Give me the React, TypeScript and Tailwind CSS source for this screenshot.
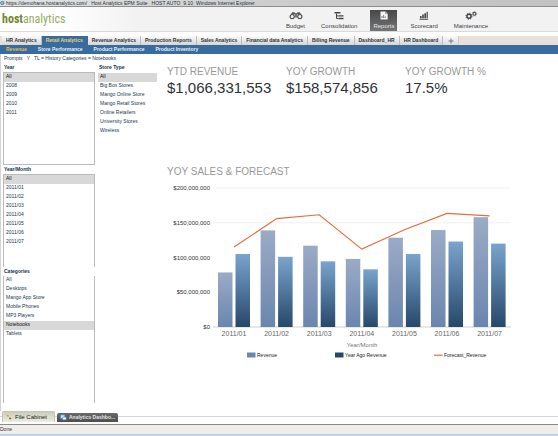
import type { ReactNode } from "react";

type ChartPoint = {
  month: string;
  revenue: number;
  yearAgo: number;
  forecast: number;
};

type ListFilterProps = {
  id: string;
  label: string;
  options: string[];
  selected: string;
  className: string;
};

const tabs = [
  "HR Analytics",
  "Retail Analytics",
  "Revenue Analytics",
  "Production Reports",
  "Sales Analytics",
  "Financial data Analytics",
  "Billing Revenue",
  "Dashboard_HR",
  "HR Dashboard",
];

const subTabs = [
  "Revenue",
  "Store Performance",
  "Product Performance",
  "Product Inventory",
];

const kpis = [
  { label: "YTD REVENUE", value: "$1,066,331,553" },
  { label: "YOY GROWTH", value: "$158,574,856" },
  { label: "YOY GROWTH %", value: "17.5%" },
];

// Values in millions of dollars
const points: ChartPoint[] = [
  { month: "2011/01", revenue: 78.5, yearAgo: 105, forecast: 115 },
  { month: "2011/02", revenue: 139, yearAgo: 101, forecast: 156 },
  { month: "2011/03", revenue: 117, yearAgo: 94.5, forecast: 161.5 },
  { month: "2011/04", revenue: 98, yearAgo: 83, forecast: 112 },
  { month: "2011/05", revenue: 128.5, yearAgo: 105, forecast: 140 },
  { month: "2011/06", revenue: 139.5, yearAgo: 123, forecast: 163.5 },
  { month: "2011/07", revenue: 158, yearAgo: 120, forecast: 160 },
];

function BudgetIcon() {
  return (
    <svg aria-hidden="true" viewBox="0 0 14 9" className="h-[9px] w-[14px]">
      <path
        d="M1.2 4.5 3.2 1.2h2.2l.8 1h1.6l.8-1h2.2l2 3.3-2 .2-2.6-1.4H5.8L3.2 4.7z"
        fill="#555"
      />
      <circle cx="3.2" cy="5.6" r="2.1" fill="#f2f2f2" stroke="#555" strokeWidth="1.2" />
      <circle cx="10.8" cy="5.6" r="2.1" fill="#f2f2f2" stroke="#555" strokeWidth="1.2" />
      <path d="M6.2 3h1.6v3.4H6.2z" fill="#555" />
    </svg>
  );
}

function ConsolidationIcon() {
  return (
    <svg aria-hidden="true" viewBox="0 0 14 9" className="h-[9px] w-[14px]">
      <path d="M2.5 1h6v1.6h-6zM6.5 4.2h5v1.4h-5zM6.5 6.8h5v1.4h-5z" fill="#444" />
      <path d="M4.5 2.5v5h2M4.5 4.9h2" fill="none" stroke="#444" />
    </svg>
  );
}

function ReportsIcon() {
  return (
    <svg aria-hidden="true" viewBox="0 0 14 9" className="h-[9px] w-[14px]">
      <path d="M3.5.5h5l2.2 2.2v5.8H3.5z" fill="#f4f4f4" />
      <path d="M8.5.5v2.2h2.2" fill="none" stroke="#777" strokeWidth=".6" />
      <path d="M5 7V5M6.6 7V4M8.2 7V5.4" stroke="#666" strokeWidth=".8" />
    </svg>
  );
}

function ScorecardIcon() {
  return (
    <svg aria-hidden="true" viewBox="0 0 14 9" className="h-[9px] w-[14px]">
      <path
        d="M3 5h1.6v2.4H3zM5.2 3.4h1.6v4H5.2zM7.4 2.2H9v5.2H7.4zM9.6.8h1.2v6.6H9.6zM2.6 8h8.6v.7H2.6z"
        fill="#444"
      />
    </svg>
  );
}

function MaintenanceIcon() {
  return (
    <svg aria-hidden="true" viewBox="0 0 14 9" className="h-[9px] w-[14px]">
      <circle cx="5" cy="5.2" r="2" fill="none" stroke="#444" strokeWidth="1.5" />
      <circle
        cx="5"
        cy="5.2"
        r="3"
        fill="none"
        stroke="#444"
        strokeWidth="1"
        strokeDasharray="1.2 1.15"
      />
      <circle cx="10.4" cy="2.8" r="1.4" fill="none" stroke="#555" strokeWidth="1.1" />
      <circle
        cx="10.4"
        cy="2.8"
        r="2.2"
        fill="none"
        stroke="#555"
        strokeWidth=".7"
        strokeDasharray=".9 .8"
      />
    </svg>
  );
}

function NavButton({
  label,
  icon,
  active = false,
}: {
  label: string;
  icon: ReactNode;
  active?: boolean;
}) {
  return (
    <button
      type="button"
      className={`flex h-[21px] flex-col items-center px-[3px] pt-px text-[6px] leading-[8px] ${
        active
          ? "bg-linear-to-b from-[#484848] to-[#757575] text-[#e4e9ee]"
          : "text-[#3f4246]"
      }`}
    >
      {icon}
      <span className="mt-[2px]">{label}</span>
    </button>
  );
}

function ListFilter({ id, label, options, selected, className }: ListFilterProps) {
  return (
    <div>
      <label
        htmlFor={id}
        className="block h-[9px] pl-px text-[5px] leading-[9px] font-bold text-[#17324a]"
      >
        {label}
      </label>
      <select
        id={id}
        size={options.length}
        defaultValue={selected}
        className={`block appearance-none overflow-hidden rounded-none bg-white p-0 text-[5px] text-[#24384c] outline-none ${className}`}
      >
        {options.map((option) => (
          <option
            key={option}
            value={option}
            className="h-[9px] min-h-0 p-0 pl-[2px] leading-[9px] checked:bg-[linear-gradient(#d8d8d8,#d8d8d8)]"
          >
            {option}
          </option>
        ))}
      </select>
    </div>
  );
}

const BASE_Y = 145;
const FIRST_CENTER = 67;
const STEP = 42.6;

function toY(value: number) {
  return BASE_Y - (value / 200) * 139;
}

function SalesChart() {
  const line = points
    .map((point, index) => `${FIRST_CENTER + index * STEP},${toY(point.forecast)}`)
    .join(" ");

  return (
    <svg
      role="img"
      aria-label="YOY sales and forecast by month"
      viewBox="0 0 350 180"
      className="mt-[4px] w-full max-w-[350px]"
    >
      <defs>
        <linearGradient id="revenue" x1="0" y1="0" x2="0" y2="1">
          <stop offset="0" stopColor="#9babc6" />
          <stop offset="1" stopColor="#6a86ae" />
        </linearGradient>
        <linearGradient id="year-ago" x1="0" y1="0" x2="0" y2="1">
          <stop offset="0" stopColor="#7aa4cd" />
          <stop offset="1" stopColor="#26486a" />
        </linearGradient>
      </defs>

      {[200, 150, 100, 50, 0].map((tick) => (
        <g key={tick}>
          {tick !== 100 && tick !== 50 ? (
            <path
              d={`M46 ${toY(tick)}H344`}
              stroke={tick === 0 ? "#cfcfcf" : "#f0f0f0"}
            />
          ) : null}
          <text x="43" y={toY(tick) + 2} fontSize="6" textAnchor="end" fill="#333">
            {tick === 0 ? "$0" : `$${tick},000,000`}
          </text>
        </g>
      ))}

      {points.map((point, index) => {
        const center = FIRST_CENTER + index * STEP;

        return (
          <g key={point.month}>
            <rect
              x={center - 16}
              y={toY(point.revenue)}
              width="14.5"
              height={BASE_Y - toY(point.revenue)}
              fill="url(#revenue)"
            />
            <rect
              x={center + 1.5}
              y={toY(point.yearAgo)}
              width="14.5"
              height={BASE_Y - toY(point.yearAgo)}
              fill="url(#year-ago)"
            />
            <text x={center} y="154" fontSize="7" textAnchor="middle" fill="#666">
              {point.month}
            </text>
          </g>
        );
      })}

      <polyline points={line} fill="none" stroke="#e2703f" strokeWidth="1.2" />

      <text x="195" y="165" fontSize="6" textAnchor="middle" fill="#777">
        Year/Month
      </text>

      <g fontSize="5" fill="#222">
        <rect x="80" y="170.5" width="8.5" height="5" fill="#6a86ae" />
        <text x="90" y="175">Revenue</text>
        <rect x="168" y="170.5" width="8.5" height="5" fill="#26486a" />
        <text x="178" y="175">Year Ago Revenue</text>
        <path d="M267 173.2h8.5" stroke="#e2703f" strokeWidth="1.2" />
        <text x="277" y="175">Forecast_Revenue</text>
      </g>
    </svg>
  );
}

export default function App() {
  return (
    <div className="flex min-h-screen flex-col overflow-hidden bg-white font-['Liberation_Sans',Arial,sans-serif] whitespace-nowrap">
      <div className="flex h-[7px] items-center border-b border-[#8e8e8e] bg-linear-to-r from-[#e4e4e4] via-[#cccccc] to-[#c2c2c2] text-[5px] leading-[6px] text-[#26313c]">
        <svg aria-hidden="true" viewBox="0 0 6 6" className="mr-px h-[6px] w-[5px]">
          <circle cx="2.8" cy="3" r="2" fill="none" stroke="#2a82cf" strokeWidth="1.2" />
          <path d="M1 3h3.6" stroke="#2a82cf" />
          <path d="M.4 4.6C1 2 4 .4 5.6.8" fill="none" stroke="#e3b23c" strokeWidth=".6" />
        </svg>
        <span>https://demohana.hostanalytics.com/</span>
        <span className="ml-[4px]">Host Analytics EPM Suite</span>
        <span className="ml-[4px]">HOST AUTO</span>
        <span className="ml-[3px]">9.10</span>
        <span className="ml-[3px]">Windows Internet Explorer</span>
      </div>

      <header className="flex h-[25px] border-b border-[#dadada] bg-linear-to-r from-white from-10% to-[#f2f2f2] to-25%">
        <a
          href="#home"
          className="flex w-[283px] shrink-0 items-center pl-[2px] font-['Liberation_Sans_Narrow','Roboto_Condensed','Open_Sans',sans-serif] text-[12px] leading-[14px] text-[#9aaa62]"
        >
          <b className="text-[#728530]">host</b>analytics
        </a>
        <nav className="flex gap-[10px] pt-[3px]">
          <NavButton label="Budget" icon={<BudgetIcon />} />
          <NavButton label="Consolidation" icon={<ConsolidationIcon />} />
          <NavButton label="Reports" icon={<ReportsIcon />} active />
          <NavButton label="Scorecard" icon={<ScorecardIcon />} />
          <NavButton label="Maintenance" icon={<MaintenanceIcon />} />
        </nav>
      </header>

      <div className="mt-[4px] flex h-[9px] bg-[#e9e1d9] pl-[2px] text-[5px] leading-[9px] font-bold text-[#333]">
        {tabs.map((tab) => (
          <button
            key={tab}
            type="button"
            className={`border-r px-[4px] ${
              tab === "Retail Analytics"
                ? "border-[#386c9f] bg-[#386c9f] text-[#e9cf7c]"
                : "border-[#bdbdbd] bg-linear-to-b from-[#fafafa] to-[#d6d6d6]"
            }`}
          >
            {tab}
          </button>
        ))}
        <button
          type="button"
          aria-label="Add tab"
          className="flex w-[16px] items-center justify-center border-r border-[#cccccc] bg-linear-to-b from-[#fafafa] to-[#dcdcdc]"
        >
          <svg aria-hidden="true" viewBox="0 0 6 6" className="h-[6px] w-[6px]">
            <path d="M3 .5v5M.5 3h5" stroke="#777" />
          </svg>
        </button>
      </div>

      <nav className="flex h-[9px] gap-[11px] bg-[#386c9f] pl-[6px] text-[5px] leading-[8px] font-bold text-[#e6eef6]">
        {subTabs.map((tab) => (
          <a
            key={tab}
            href="#report"
            className={tab === "Revenue" ? "text-[#e8b84c]" : ""}
          >
            {tab}
          </a>
        ))}
      </nav>

      <div className="flex flex-1 flex-col border-l border-[#d4d4d4] pl-[2px]">
        <p className="h-[9px] pl-px text-[5px] leading-[9px] text-[#24384c]">
          Prompts &nbsp; Y &nbsp; TL = History Categories = Notebooks
        </p>

        <div className="flex">
          <aside className="flex w-[164px] shrink-0 gap-[3px]">
            <div className="w-[92px]">
              <ListFilter
                id="year"
                label="Year"
                options={["All", "2008", "2009", "2010", "2011"]}
                selected="All"
                className="h-[93px] w-full border border-[#b9bbbd]"
              />
              <ListFilter
                id="year-month"
                label="Year/Month"
                options={[
                  "All",
                  "2011/01",
                  "2011/02",
                  "2011/03",
                  "2011/04",
                  "2011/05",
                  "2011/06",
                  "2011/07",
                ]}
                selected="All"
                className="h-[93px] w-full border-x border-t border-[#b9bbbd]"
              />
              <ListFilter
                id="categories"
                label="Categories"
                options={[
                  "All",
                  "Desktops",
                  "Mango App Store",
                  "Mobile Phones",
                  "MP3 Players",
                  "Notebooks",
                  "Tablets",
                ]}
                selected="Notebooks"
                className="h-[127px] w-full border-x border-[#b9bbbd]"
              />
            </div>
            <ListFilter
              id="store-type"
              label="Store Type"
              options={[
                "All",
                "Big Box Stores",
                "Mango Online Store",
                "Mango Retail Stores",
                "Online Retailers",
                "University Stores",
                "Wireless",
              ]}
              selected="All"
              className="h-[93px] w-[59px] border-t border-white"
            />
          </aside>

          <main className="min-w-0 flex-1 pt-[3px]">
            <dl className="grid grid-cols-[119px_119px_1fr]">
              {kpis.map((kpi) => (
                <div key={kpi.label}>
                  <dt className="text-[10px] leading-[12px] text-[#999]">{kpi.label}</dt>
                  <dd className="text-[15px] leading-[20px] text-[#303236]">{kpi.value}</dd>
                </div>
              ))}
            </dl>
            <h2 className="mt-[68px] text-[10px] leading-[12px] text-[#999]">
              YOY SALES &amp; FORECAST
            </h2>
            <SalesChart />
          </main>
        </div>
      </div>

      <footer>
        <div className="flex h-[11px] items-end gap-[2px] bg-[linear-gradient(#d4d4d4,#d4d4d4)] bg-[length:100%_1px] bg-[position:0_5px] bg-no-repeat pl-[2px]">
          <button
            type="button"
            className="flex h-[11px] w-[53px] items-center gap-[3px] rounded-t-[2px] border border-b-0 border-[#c3c6b4] bg-linear-to-b from-[#c9cdb8] to-[#ecede4] pl-[3px] text-[6px] leading-[9px] text-[#222]"
          >
            <svg aria-hidden="true" viewBox="0 0 6 6" className="h-[6px] w-[6px]">
              <path d="M.5 1h2l1 1.5h-3z" fill="#d3a13c" />
              <path d="m3 3.5 2.5.5-.5 1.5-2-.6z" fill="#8a7440" />
            </svg>
            File Cabinet
          </button>
          <button
            type="button"
            className="flex h-[9px] w-[61px] items-center gap-[2px] rounded-t-[2px] bg-linear-to-b from-[#6a6a6a] to-[#4e4e4e] pl-[3px] text-[5px] leading-[9px] font-bold text-[#e6e6e6]"
          >
            <svg aria-hidden="true" viewBox="0 0 8 7" className="h-[7px] w-[7px] shrink-0">
              <path d="M.5.5h5v4h-5z" fill="#d5e5f5" stroke="#4f8cc9" />
              <path d="M3 3h4v3.2H3z" fill="#fff" stroke="#4f8cc9" strokeWidth=".8" />
            </svg>
            Analytics Dashbo...
          </button>
        </div>
        <div className="mt-[2px] h-[12px] border-t border-b-2 border-t-[#8a8a8a] border-b-[#b5d3f0] bg-[#f0edeb] text-[5px] leading-[9px] text-[#333]">
          Done
        </div>
      </footer>
    </div>
  );
}
